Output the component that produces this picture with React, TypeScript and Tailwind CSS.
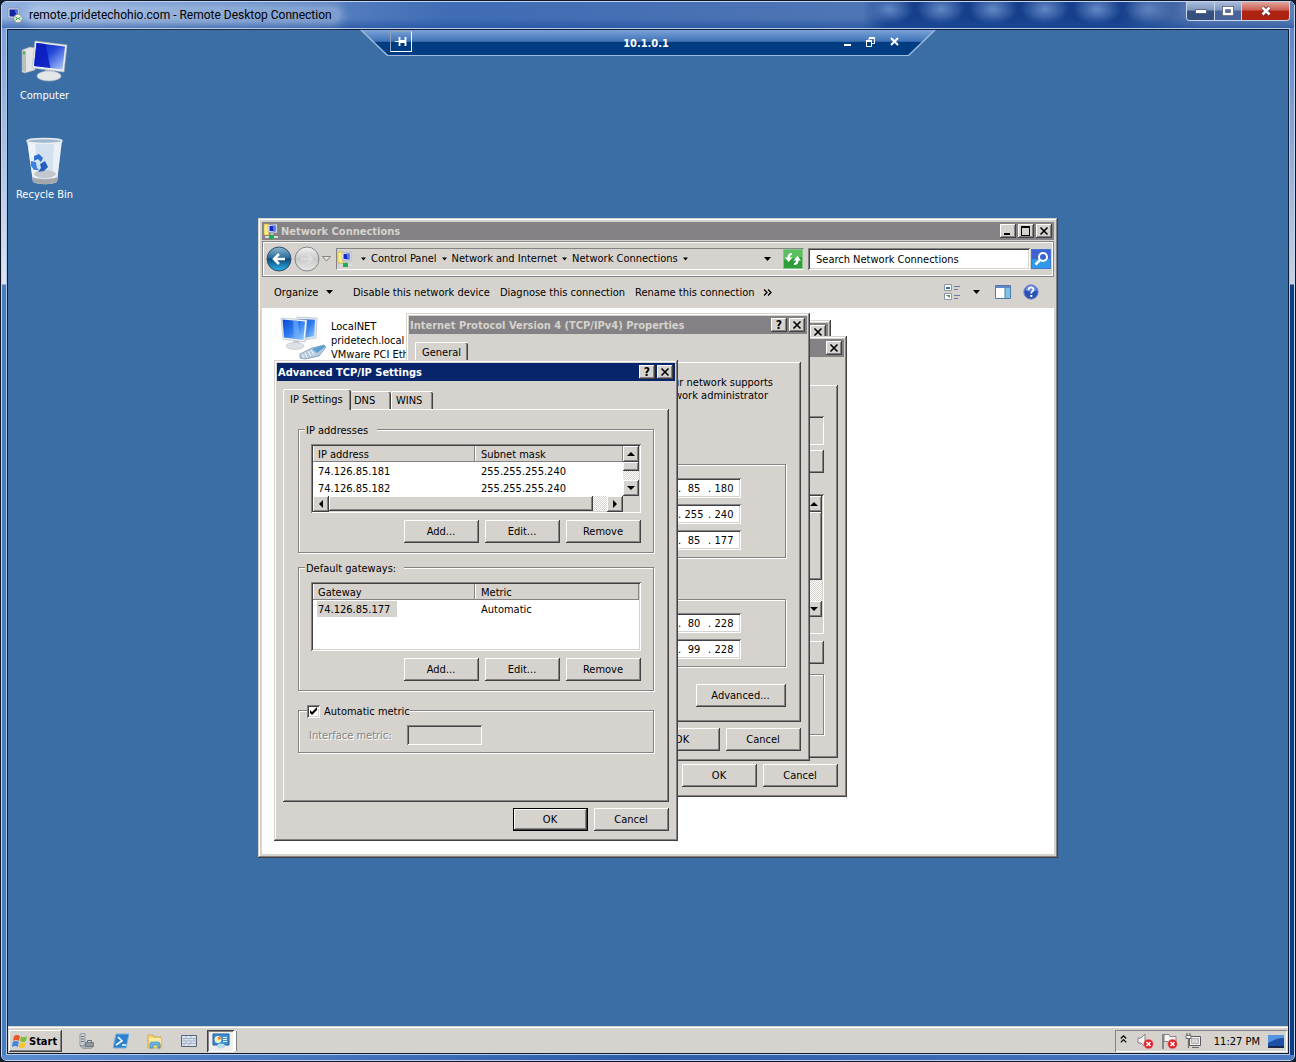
import type { ReactNode } from 'react';
import { clsx } from 'clsx';

// Classic 3D edges
const RAISED = 'bg-[#d6d3ce] shadow-[inset_-1px_-1px_#424142,inset_1px_1px_#ffffff,inset_-2px_-2px_#848284]';
const SUNKEN = 'shadow-[inset_1px_1px_#848284,inset_-1px_-1px_#ffffff,inset_2px_2px_#424142,inset_-2px_-2px_#d6d3ce]';
const WINDOW_EDGE =
  'bg-[#d6d3ce] shadow-[inset_-1px_-1px_#424142,inset_1px_1px_#d6d3ce,inset_-2px_-2px_#848284,inset_2px_2px_#ffffff]';
const DITHER = 'bg-[repeating-conic-gradient(#ffffff_0_25%,#d6d3ce_0_50%)] bg-[length:2px_2px]';

interface ChildrenProps {
  children?: ReactNode;
  className?: string;
}

type CaptionName = 'min' | 'max' | 'close' | 'help';

function Glyph({ name }: { name: CaptionName }) {
  return (
    <svg width="12" height="10" viewBox="0 0 12 10" shapeRendering="crispEdges" fill="none" stroke="#000">
      {name === 'min' && <path d="M2 8h6" strokeWidth="2" />}
      {name === 'max' && <path d="M1.5 1v8.500h8V1" strokeWidth="1" />}
      {name === 'max' && <path d="M1 1h9" strokeWidth="2" />}
      {name === 'close' && <path d="M2.500 1.500l7 7M9.500 1.500l-7 7" strokeWidth="1.600" shapeRendering="auto" />}
    </svg>
  );
}

function CaptionButton({ name }: { name: CaptionName }) {
  return (
    <button
      aria-label={name}
      className={clsx('flex h-[14px] w-4 items-center justify-center text-[12px] leading-[14px] text-black', RAISED)}
    >
      {name === 'help' ? '?' : <Glyph name={name} />}
    </button>
  );
}

interface TitleBarProps {
  title?: string;
  active?: boolean;
  icon?: ReactNode;
  children?: ReactNode;
}

function TitleBar({ title, active, icon, children }: TitleBarProps) {
  return (
    <header
      className={clsx(
        'flex h-[18px] shrink-0 items-center pr-0.5 pl-px font-bold whitespace-nowrap',
        active ? 'bg-[#08246b] text-white' : 'bg-[#848284] text-[#d6d3ce]',
      )}
    >
      {icon}
      <h2 className="flex-1">{title}</h2>
      <div className="flex gap-0.5">{children}</div>
    </header>
  );
}

function Dialog({ children, className }: ChildrenProps) {
  return <section className={clsx('absolute flex flex-col p-[3px]', WINDOW_EDGE, className)}>{children}</section>;
}

function PushButton({ children, isDefault, className = 'w-[75px]' }: ChildrenProps & { isDefault?: boolean }) {
  return (
    <button
      className={clsx('h-[23px] shrink-0 pr-px pb-px text-center', RAISED, isDefault && 'border border-black', className)}
    >
      {children}
    </button>
  );
}

function Group({ legend, children, className }: ChildrenProps & { legend?: ReactNode }) {
  return (
    <fieldset
      className={clsx(
        'min-w-0 border border-[#848284] px-3 shadow-[1px_1px_#ffffff,inset_1px_1px_#ffffff]',
        className,
      )}
    >
      {legend}
      {children}
    </fieldset>
  );
}

function Arrow({ dir }: { dir: 'up' | 'down' | 'left' | 'right' }) {
  const paths = {
    up: 'M0 6h8L4 2z',
    down: 'M0 2h8L4 6z',
    left: 'M6 0v8L2 4z',
    right: 'M2 0v8l4-4z',
  };
  return (
    <svg width="8" height="8" viewBox="0 0 8 8">
      <path d={paths[dir]} />
    </svg>
  );
}

function ScrollButton({ dir }: { dir: 'up' | 'down' | 'left' | 'right' }) {
  return (
    <button aria-label={`Scroll ${dir}`} className={clsx('flex size-4 shrink-0 items-center justify-center', RAISED)}>
      <Arrow dir={dir} />
    </button>
  );
}

interface ListProps {
  columns: string[];
  rows: string[][];
  selected?: number;
}

function DataTable({ columns, rows, selected }: ListProps) {
  return (
    <table className="w-full table-fixed border-collapse text-left">
      <thead>
        <tr className="bg-[#d6d3ce]">
          {columns.map((column, index) => (
            <th
              key={column}
              className={clsx(
                'h-4 p-0 pt-0.5 font-normal leading-[14px] shadow-[inset_-1px_-1px_#848284,inset_1px_0_#ffffff]',
                index === 0 ? 'w-[162px] pl-[5px]' : 'pl-1.5',
              )}
            >
              {column}
            </th>
          ))}
        </tr>
      </thead>
      <tbody>
        {rows.map((row, index) => (
          <tr key={row[0]}>
            {row.map((cell, cellIndex) => (
              <td key={cellIndex} className={clsx('h-[17px] p-0 align-bottom', cellIndex === 0 ? 'pl-1' : 'pl-[5px]')}>
                <span
                  className={clsx(
                    'block h-4 px-px pt-0.5 leading-[14px]',
                    index === selected && cellIndex === 0 && 'w-20 bg-[#d6d3ce]',
                  )}
                >
                  {cell}
                </span>
              </td>
            ))}
          </tr>
        ))}
      </tbody>
    </table>
  );
}

function ListButtons() {
  return (
    <div className="mt-[7px] flex justify-end gap-1.5 pb-[9px]">
      <PushButton>Add...</PushButton>
      <PushButton>Edit...</PushButton>
      <PushButton>Remove</PushButton>
    </div>
  );
}

function Tab({ children, active, className }: ChildrenProps & { active?: boolean }) {
  return (
    <button
      role="tab"
      aria-selected={!!active}
      className={clsx(
        'rounded-t-[2px] border-t border-white bg-[#d6d3ce] text-left shadow-[inset_-1px_0_#424142,inset_-2px_0_#848284]',
        active ? 'relative -mb-px h-[21px] border-l pb-0.5 pl-1.5' : 'h-[18px]',
        className,
      )}
    >
      {children}
    </button>
  );
}

function TabPanel({ children, className }: ChildrenProps) {
  return (
    <div
      role="tabpanel"
      className={clsx(
        'flex flex-1 flex-col shadow-[inset_-1px_-1px_#424142,inset_1px_1px_#ffffff,inset_-2px_-2px_#848284]',
        className,
      )}
    >
      {children}
    </div>
  );
}

function AdvancedDialog() {
  return (
    <Dialog className="top-[330px] left-[266px] h-[481px] w-[404px]">
      <TitleBar title="Advanced TCP/IP Settings" active>
        <CaptionButton name="help" />
        <CaptionButton name="close" />
      </TitleBar>
      <div className="flex flex-1 flex-col px-1.5 pt-2 pb-[7px]">
        <div role="tablist" className="flex items-end">
          <Tab active className="w-[68px]">IP Settings</Tab>
          <Tab className="w-10 pl-[3px]">DNS</Tab>
          <Tab className="w-[42px] border-l pl-1">WINS</Tab>
        </div>
        <TabPanel className="px-[15px] pt-[13px]">
          <Group
            className="pt-2"
            legend={<legend className="-ml-1.5 h-3.5 w-[72px] bg-[#d6d3ce] px-px pt-0.5">IP addresses</legend>}
          >
            <div className={clsx('h-[69px] bg-white p-0.5', SUNKEN)}>
              <div className="flex h-[50px]">
                <div className="min-w-0 flex-1 overflow-hidden">
                  <DataTable
                    columns={['IP address', 'Subnet mask']}
                    rows={[
                      ['74.126.85.181', '255.255.255.240'],
                      ['74.126.85.182', '255.255.255.240'],
                    ]}
                  />
                </div>
                <div className={clsx('flex w-4 flex-col', DITHER)}>
                  <ScrollButton dir="up" />
                  <div className={clsx('mb-auto h-[9px]', RAISED)} />
                  <ScrollButton dir="down" />
                </div>
              </div>
              <div className="flex h-[15px] bg-[#d6d3ce] pr-4">
                <div className={clsx('flex flex-1', DITHER)}>
                  <ScrollButton dir="left" />
                  <div className={clsx('mr-3.5 flex-1', RAISED)} />
                  <ScrollButton dir="right" />
                </div>
              </div>
            </div>
            <ListButtons />
          </Group>
          <Group
            className="mt-[7px] pt-2"
            legend={<legend className="-ml-1.5 h-3.5 w-[99px] bg-[#d6d3ce] px-px pt-0.5">Default gateways:</legend>}
          >
            <div className={clsx('h-[69px] bg-white p-0.5', SUNKEN)}>
              <DataTable columns={['Gateway', 'Metric']} rows={[['74.126.85.177', 'Automatic']]} selected={0} />
            </div>
            <ListButtons />
          </Group>
          <Group
            className="mt-3 pt-2 pb-[7px]"
            legend={
              <legend className="-ml-1 h-3.5 bg-[#d6d3ce] pt-0.5">
                <label className="flex items-center gap-1">
                  <span className="relative flex size-[13px]">
                    <input
                      type="checkbox"
                      defaultChecked
                      className={clsx('peer size-[13px] appearance-none bg-white', SUNKEN)}
                    />
                    <svg
                      className="pointer-events-none absolute inset-0 hidden peer-checked:block"
                      width="13"
                      height="13"
                      viewBox="0 0 13 13"
                    >
                      <path d="M3 5v3l2 2 5-5V2L5 7z" />
                    </svg>
                  </span>
                  Automatic metric
                </label>
              </legend>
            }
          >
            <div className="flex items-center text-[#848284] [text-shadow:1px_1px_#ffffff]">
              <label htmlFor="metric" className="-ml-0.5 w-[98px]">Interface metric:</label>
              <input id="metric" disabled className={clsx('h-5 w-[75px]', SUNKEN)} />
            </div>
          </Group>
        </TabPanel>
        <div className="mt-1.5 flex justify-end gap-1.5">
          <PushButton isDefault>OK</PushButton>
          <PushButton>Cancel</PushButton>
        </div>
      </div>
    </Dialog>
  );
}

function IpField({ label, parts }: { label: string; parts: string[] }) {
  return (
    <div
      role="group"
      aria-label={label}
      className={clsx('ml-auto flex h-5 w-[142px] items-center justify-end bg-white pr-[5px]', SUNKEN)}
    >
      {parts.map((part, index) => (
        <span key={index} className="flex items-center">
          {index > 0 && <span className="w-1.5 pl-0.5">.</span>}
          <input
            aria-label={`${label} part ${index + 1}`}
            defaultValue={part}
            className="h-4 w-6 text-center outline-none"
          />
        </span>
      ))}
    </div>
  );
}

function Ipv4Dialog() {
  return (
    <Dialog className="top-[283px] left-[398px] h-[448px] w-[404px]">
      <TitleBar title="Internet Protocol Version 4 (TCP/IPv4) Properties">
        <CaptionButton name="help" />
        <CaptionButton name="close" />
      </TitleBar>
      <div className="flex flex-1 flex-col px-1.5 pt-2 pb-[7px]">
        <div role="tablist" className="flex items-end">
          <Tab active className="w-[53px]">General</Tab>
        </div>
        <TabPanel className="px-[15px] pt-[14px]">
          <div className="flex h-[88px] flex-col text-right">
            <p className="pr-[13px]">your network supports</p>
            <p className="pr-[18px]">network administrator</p>
          </div>
          <Group className="h-[94px] space-y-1.5 !pr-11 pt-[13px]">
            <IpField label="IP address" parts={['74', '126', '85', '180']} />
            <IpField label="Subnet mask" parts={['255', '255', '255', '240']} />
            <IpField label="Default gateway" parts={['74', '126', '85', '177']} />
          </Group>
          <Group className="mt-[41px] h-[68px] space-y-1.5 !pr-11 pt-[13px]">
            <IpField label="Preferred DNS server" parts={['66', '119', '80', '228']} />
            <IpField label="Alternate DNS server" parts={['66', '119', '99', '228']} />
          </Group>
          <div className="mt-[17px] flex justify-end">
            <PushButton className="w-[90px]">Advanced...</PushButton>
          </div>
        </TabPanel>
        <div className="mt-1.5 flex justify-end gap-1.5">
          <PushButton>OK</PushButton>
          <PushButton>Cancel</PushButton>
        </div>
      </div>
    </Dialog>
  );
}

function LocalNetDialog() {
  return (
    <Dialog className="top-[306px] left-[476px] h-[461px] w-[363px]">
      <TitleBar>
        <CaptionButton name="close" />
      </TitleBar>
      <div className="flex flex-1 flex-col px-1.5 pt-7 pb-[7px]">
        <TabPanel className="px-[14px] pt-[31px]">
          <div className={clsx('h-[29px]', SUNKEN)} />
          <div className="mt-[5px] flex justify-end">
            <PushButton />
          </div>
          <div className={clsx('mt-[21px] h-[140px] p-0.5', SUNKEN)}>
            <div className={clsx('ml-auto flex h-[121px] w-4 flex-col', DITHER)}>
              <ScrollButton dir="up" />
              <div className={clsx('mb-auto h-[68px]', RAISED)} />
              <ScrollButton dir="down" />
            </div>
          </div>
          <div className="mt-[7px] flex justify-end">
            <PushButton />
          </div>
          <Group className="mt-2.5 h-[61px]" />
        </TabPanel>
        <div className="mt-1.5 flex justify-end gap-1.5">
          <PushButton>OK</PushButton>
          <PushButton>Cancel</PushButton>
        </div>
      </div>
    </Dialog>
  );
}

function NetworkIcon({ size = 16 }: { size?: number }) {
  return (
    <svg width={size} height={size} viewBox="0 0 16 16" className="shrink-0">
      <path d="M1 1h5v11H1z" fill="#ffef84" stroke="#c6a23a" strokeWidth=".6" />
      <path d="M5 2l9-1v9l-9-1z" fill="#eceef5" stroke="#8b93ac" strokeWidth=".5" />
      <path d="M6.500 3l6-.6v6l-6-.5z" fill="#1527c4" />
      <path d="M9.500 2.700l3-.3v6l-2-.2z" fill="#5a78ee" />
      <path d="M7.500 10h3v2h-3z" fill="#b8bccb" />
      <path d="M2 13h13v2H2z" fill="#d8dbe0" />
      <path d="M6 12h5v4H6z" fill="#18b052" />
    </svg>
  );
}

function LanIcon() {
  return (
    <svg width="48" height="46" viewBox="0 0 48 46" className="shrink-0">
      <defs>
        <linearGradient id="lan" x1="0" y1="0" x2="1" y2="1">
          <stop offset="0" stopColor="#0f46cc" />
          <stop offset=".5" stopColor="#2d7cf0" />
          <stop offset="1" stopColor="#9bd2ff" />
        </linearGradient>
      </defs>
      <path d="M17 1l20 1-1 20-17 3z" fill="#e6e9ee" stroke="#a8b0bc" strokeWidth=".6" />
      <path d="M19 3l16 .7-.8 16.500-14 2.500z" fill="url(#lan)" />
      <path d="M13 25l6-1 1 6h-6z" fill="#cfd3d8" />
      <ellipse cx="15" cy="30" rx="9" ry="3.500" fill="#dde0e4" stroke="#b0b5bd" strokeWidth=".5" />
      <path d="M1 2l26 2-2 22-22-3z" fill="#f2f4f7" stroke="#a8b0bc" strokeWidth=".6" />
      <path d="M2.500 3.500l22.500 2-1.500 18.500-19.500-2.500z" fill="url(#lan)" />
      <path d="M13 4.500l5 .5 2 18.500-6-.7z" fill="#78b2fa" opacity=".6" />
      <path d="M20 38l12-6 12-3 2 2-7 9-14 3-5-1z" fill="#b7cbe0" stroke="#6b8bab" strokeWidth=".7" />
      <path d="M32 33l12-4 1 2-8 6z" fill="#5d9ed2" />
      <path d="M22 38l2 4M25 36.500l2 5M28 35l3 5M31 34l3 5" stroke="#f4f8fc" strokeWidth="1" />
    </svg>
  );
}

function NavArrow({ forward }: { forward?: boolean }) {
  return (
    <svg width="26" height="26" viewBox="0 0 26 26">
      <defs>
        <linearGradient id="back" x1="0" y1="0" x2="0" y2="1">
          <stop offset="0" stopColor="#8fb6cf" />
          <stop offset=".45" stopColor="#2c6f9c" />
          <stop offset=".5" stopColor="#0c4a7c" />
          <stop offset="1" stopColor="#2cb4e8" />
        </linearGradient>
        <linearGradient id="fwd" x1="0" y1="0" x2="0" y2="1">
          <stop offset="0" stopColor="#f1f1f1" />
          <stop offset=".5" stopColor="#c9c9cb" />
          <stop offset="1" stopColor="#e8e8e8" />
        </linearGradient>
      </defs>
      <circle cx="13" cy="13" r="12" fill={forward ? 'url(#fwd)' : 'url(#back)'} stroke={forward ? '#848487' : '#2f4f66'} />
      <path
        d={forward ? 'M7 13h11M13 8l5 5-5 5' : 'M19 13H8M13 8l-5 5 5 5'}
        fill="none"
        stroke={forward ? '#dcdcde' : '#fff'}
        strokeWidth="2.500"
      />
    </svg>
  );
}

const CRUMBS = ['Control Panel', 'Network and Internet', 'Network Connections'];

function SmallArrow({ className }: { className?: string }) {
  return (
    <svg width="7" height="4" viewBox="0 0 7 4" className={clsx('shrink-0', className)}>
      <path d="M0 0h7L3.500 4z" />
    </svg>
  );
}

// Breadcrumb arrows are drawn a little smaller than the menu ones
function CrumbArrow({ className }: { className?: string }) {
  return (
    <svg width="7" height="4" viewBox="0 0 7 4" className={clsx('shrink-0', className)}>
      <path d="M1 .5h5L3.500 3.500z" />
    </svg>
  );
}

function AddressRow() {
  return (
    <div className="mt-px flex h-9 items-center border border-[#848284] pr-0.5 pl-[3px] shadow-[inset_1px_1px_#ffffff,inset_-1px_-1px_#ffffff]">
      <div className="flex items-center gap-0.5">
        <button aria-label="Back"><NavArrow /></button>
        <button aria-label="Forward"><NavArrow forward /></button>
        <svg width="9" height="6" viewBox="0 0 9 6" className="mr-[5px]">
          <path d="M.5.5h8l-4 4.500z" fill="#e4e4e4" stroke="#848284" />
        </svg>
      </div>
      <nav className="flex h-[22px] flex-1 items-center border border-[#848284] border-r-transparent border-b-white pb-px">
        <NetworkIcon />
        <CrumbArrow className="mr-1 ml-[7px]" />
        {CRUMBS.map((crumb) => (
          <span key={crumb} className="flex items-center">
            <a href="#">{crumb}</a>
            <CrumbArrow className="mx-1" />
          </span>
        ))}
        <SmallArrow className="mr-3 ml-auto" />
        <button aria-label="Refresh">
          <svg width="20" height="20" viewBox="0 0 20 20">
            <path d="M0 0h20v20H0z" fill="#7fcb86" />
            <path d="M1 1h18v18H1z" fill="#2f9e3a" />
            <path d="M1 1h18v7L1 11z" fill="#5cbf5f" />
            <path d="M5.500 13L2 8.500h2.500C4.500 5.500 6 4 9 4v2c-1.300 0-2 .7-2 2.500h2.500z" fill="#fff" />
            <path d="M14.500 7l3.500 4.500h-2.500c0 3-1.500 4.500-4.500 4.500v-2c1.300 0 2-.7 2-2.500h-2.500z" fill="#fff" />
          </svg>
        </button>
      </nav>
      <input
        aria-label="Search"
        defaultValue="Search Network Connections"
        className={clsx('ml-1 h-[22px] w-[222px] bg-white pl-2 outline-none', SUNKEN)}
      />
      <button aria-label="Find" className="ml-px">
        <svg width="20" height="20" viewBox="0 0 20 20">
          <path d="M0 0h20v20H0z" fill="#3f78d8" />
          <path d="M1 1h18v9H1z" fill="#3e63cf" />
          <path d="M1 10h18v9H1z" fill="#2f9be8" />
          <circle cx="12" cy="8" r="4" fill="none" stroke="#fff" strokeWidth="2" />
          <path d="M9 11l-4.500 4.500" stroke="#fff" strokeWidth="2.500" />
        </svg>
      </button>
    </div>
  );
}

function CommandRow() {
  return (
    <div className="flex h-[31px] items-center pr-[15px] pb-px pl-3">
      <button className="mr-5 flex w-[59px] items-center justify-between">
        Organize
        <SmallArrow />
      </button>
      <div className="flex gap-2.5">
        <button>Disable this network device</button>
        <button>Diagnose this connection</button>
        <button>Rename this connection</button>
      </div>
      <button aria-label="More" className="ml-2">
        <svg width="9" height="7" viewBox="0 0 9 7" fill="none" stroke="#000" strokeWidth="1.300">
          <path d="M1 .5l3 3-3 3M5 .5l3 3-3 3" />
        </svg>
      </button>
      <div className="ml-auto flex items-center">
        <button aria-label="Change view" className="flex items-center gap-[13px]">
          <svg width="16" height="16" viewBox="0 0 16 16">
            <path d="M.5.5h7v6h-7zM.5 9.500h7v6h-7z" fill="#fff" stroke="#8c94a8" />
            <path d="M2 3h4v2H2z" fill="#2d6ea8" />
            <path d="M2 11l4 3V11z" fill="#4a9a3c" />
            <path d="M10 2.500h6M10 5.500h4M10 11.500h6M10 14.500h4" stroke="#6c7da4" />
          </svg>
          <SmallArrow />
        </button>
        <button aria-label="Preview pane" className="ml-[15px]">
          <svg width="16" height="14" viewBox="0 0 16 14">
            <path d="M.5.5h15v13H.5z" fill="#fff" stroke="#5078ac" />
            <path d="M1 1h14v2H1z" fill="#5b8ac4" />
            <path d="M10 3h5v10h-5z" fill="#7cc4e4" />
            <path d="M10 3v10" stroke="#5078ac" />
          </svg>
        </button>
        <button aria-label="Help" className="ml-3">
          <svg width="16" height="16" viewBox="0 0 16 16">
            <circle cx="8" cy="8" r="7.300" fill="#2a51b8" stroke="#8c9cc8" />
            <path d="M2 6a6.200 6.200 0 0 1 12 0c-3 2-9 2-12 0z" fill="#6a8ade" />
            <path d="M5.500 6c0-3.500 5-3.300 5-.5 0 2-2.300 1.800-2.300 4" fill="none" stroke="#fff" strokeWidth="1.700" />
            <path d="M7.300 11h2v2h-2z" fill="#fff" />
          </svg>
        </button>
      </div>
    </div>
  );
}

function NetworkWindow() {
  return (
    <section className={clsx('absolute top-[188px] left-[250px] flex h-[640px] w-[800px] flex-col p-1', WINDOW_EDGE)}>
      <TitleBar title="Network Connections" icon={<span className="mr-0.5"><NetworkIcon /></span>}>
        <CaptionButton name="min" />
        <CaptionButton name="max" />
        <CaptionButton name="close" />
      </TitleBar>
      <AddressRow />
      <CommandRow />
      <div className="flex-1 bg-white px-[18px] pt-2">
        <div className="flex gap-[3px] whitespace-nowrap">
          <LanIcon />
          <div className="pt-1 leading-[14px]">
            <p>LocalNET</p>
            <p>pridetech.local</p>
            <p>VMware PCI Eth</p>
          </div>
        </div>
      </div>
    </section>
  );
}

function DesktopIcons() {
  return (
    <div className="flex w-[73px] flex-col items-center pt-2 text-white">
      <a href="#" className="flex flex-col items-center">
        <svg width="48" height="48" viewBox="0 0 48 48">
          <defs>
            <linearGradient id="screen" x1="0" y1="0" x2="1" y2="1">
              <stop offset="0" stopColor="#0a1fae" />
              <stop offset=".45" stopColor="#2447d8" />
              <stop offset="1" stopColor="#b4d0ff" />
            </linearGradient>
          </defs>
          <path d="M2 12l8-3 5 1v22L5 35l-3-1z" fill="#e3e5e4" stroke="#a5aaad" strokeWidth=".5" />
          <path d="M2 12l4 1v21l-4-1z" fill="#b9bfbd" />
          <circle cx="4" cy="15" r="1.200" fill="#2fb53c" />
          <path d="M15 3l32 4-3 27-32-4z" fill="#eceef0" stroke="#b0b6bc" strokeWidth=".6" />
          <path d="M16.500 5l28.500 3.500-2.500 23L14 28z" fill="url(#screen)" />
          <path d="M16.500 5l9 1 5 24-16.500-2z" fill="#0b1cc0" opacity=".85" />
          <path d="M25 32l9 1v5h-9z" fill="#c6cacd" />
          <ellipse cx="29" cy="38" rx="12" ry="5" fill="#e4e7e8" stroke="#b3b9bd" strokeWidth=".6" />
        </svg>
        <span className="mt-[3px]">Computer</span>
      </a>
      <a href="#" className="mt-[35px] flex flex-col items-center">
        <svg width="48" height="48" viewBox="0 0 48 48">
          <path d="M7 3l35 0-5 42c-6 3-18 3-24 0z" fill="#dfe9f3" opacity=".93" />
          <path d="M7 3h8l3 43-5-1z" fill="#fff" opacity=".6" />
          <path d="M34 3h8l-5 42-5 1z" fill="#fff" opacity=".5" />
          <path d="M12.500 40c6 3 18 3 25 0l-.5 5c-6 3-18 3-24 0z" fill="#a4a8ac" />
          <ellipse cx="25" cy="37" rx="11" ry="4" fill="#c4c8cc" />
          <ellipse cx="24.500" cy="4" rx="17.500" ry="2.500" fill="#9fb8ce" stroke="#e8ecef" strokeWidth="1.500" />
          <path d="M14 19l5-2 4 4-2 4-3-3-4 2z" fill="#2d6fd0" />
          <path d="M11 24l5 1 1 6 2 2-5 0-3-4z" fill="#3c82e0" />
          <path d="M20 27l5-3 3 6-4 4-6 1 3-4z" fill="#245fc0" />
        </svg>
        <span className="mt-[3px]">Recycle Bin</span>
      </a>
    </div>
  );
}

function ConnectionBar() {
  return (
    <div className="absolute top-0 left-1/2 h-[26px] w-[576px] -translate-x-1/2 bg-[#9fbbdd] pb-px [clip-path:polygon(0_0,100%_0,calc(100%-27px)_100%,27px_100%)]">
      <div className="flex h-[25px] items-center bg-linear-to-b from-[#7ba2d8] from-0% via-[#3f74b8] via-45% to-[#003c82] to-50% pr-[37px] pl-[30px] text-white [clip-path:polygon(2px_0,calc(100%-2px)_0,calc(100%-28px)_100%,28px_100%)]">
        <button
          aria-label="Pin"
          className="mb-0.5 flex h-[21px] w-[22px] items-center justify-center border border-[#8fa0b8] border-r-white border-b-white"
        >
          <svg width="12" height="9" viewBox="0 0 12 9" stroke="#fff" fill="none">
            <path d="M0 4.500h4" strokeWidth="1" />
            <path d="M4.500 0v9M10.500 0v9" strokeWidth="1.800" />
            <path d="M5 4.500h5" strokeWidth="3" />
          </svg>
        </button>
        <span className="flex-1 pt-px pl-9 text-center font-bold">10.1.0.1</span>
        <div className="flex items-center gap-[15px]">
          <button aria-label="Minimize">
            <svg width="7" height="10" viewBox="0 0 7 10"><path d="M0 6h7v2H0z" fill="#fff" /></svg>
          </button>
          <button aria-label="Restore" className="pb-0.5">
            <svg width="9" height="10" viewBox="0 0 9 10" fill="none" stroke="#fff">
              <path d="M.5 4v5.500h5V4M3 3V1M8.500 1v5.500H6" />
              <path d="M0 4h6M3 1h6" strokeWidth="2" />
            </svg>
          </button>
          <button aria-label="Close" className="pb-0.5">
            <svg width="9" height="9" viewBox="0 0 9 9" stroke="#fff" strokeWidth="2">
              <path d="M1 1l7 7M8 1L1 8" />
            </svg>
          </button>
        </div>
      </div>
    </div>
  );
}

function Taskbar() {
  return (
    <footer className="flex h-[27px] items-center border-t border-[#d6d3ce] bg-[#d6d3ce] px-px shadow-[inset_0_1px_#ffffff]">
      <button className={clsx('mt-0.5 flex h-[22px] w-[53px] items-center pl-[3px] font-bold', RAISED)}>
        <svg width="16" height="16" viewBox="0 0 16 16" className="shrink-0">
          <path d="M2 3c2-1.500 4-1.500 6 0L7 8C5 6.800 3 6.800 1 8z" fill="#e8562a" />
          <path d="M9 3.500c2 1 4 1 6-.5l-1 5c-2 1.300-4 1.300-6 .3z" fill="#7dbb3a" />
          <path d="M.8 9c2-1.200 4-1.200 6 0l-1 5c-2-1.200-4-1.200-6 0z" fill="#3d86d8" />
          <path d="M7.700 9.400c2 1 4 1 6-.4l-1 5c-2 1.300-4 1.300-6 .3z" fill="#f7c628" />
        </svg>
        <span className="ml-px">Start</span>
      </button>
      <div className="mt-0.5 ml-[17px] flex items-center gap-[18px]">
        <button aria-label="Server Manager">
          <svg width="16" height="16" viewBox="0 0 16 16">
            <path d="M1 1l5-1v12l-5 1z" fill="#c9ced3" stroke="#7d858c" strokeWidth=".7" />
            <path d="M2 3.500h3M2 6h3M2 8.500h3" stroke="#6e767d" />
            <path d="M1 13l8-1 6 1-3 2.500H4z" fill="#aab1b6" stroke="#7d858c" strokeWidth=".5" />
            <path d="M6.500 9.500h8v4h-8z" fill="#8e979e" stroke="#5e676e" strokeWidth=".7" />
            <path d="M8.500 9V7.500h4V9" fill="none" stroke="#5e676e" />
          </svg>
        </button>
        <button aria-label="PowerShell">
          <svg width="16" height="16" viewBox="0 0 16 16">
            <path d="M3 1h13l-3 14H0z" fill="#2b83cf" stroke="#77b0e0" />
            <path d="M5 4l4 4-6 4M9 12h4" fill="none" stroke="#fff" strokeWidth="1.600" />
          </svg>
        </button>
        <button aria-label="Explorer">
          <svg width="16" height="16" viewBox="0 0 16 16">
            <path d="M1 2h5l1 2h7v11H1z" fill="#f4d66c" stroke="#c49c38" strokeWidth=".7" />
            <path d="M2 5h12v6H2z" fill="#fbeaa0" />
            <path d="M3 15v-4c0-1.500 1-2 2-2h6c1 0 2 .5 2 2v4h-2v-3H6v3z" fill="#6cb4e4" stroke="#3a7cb4" strokeWidth=".6" />
          </svg>
        </button>
        <button aria-label="Firewall">
          <svg width="16" height="12" viewBox="0 0 16 12">
            <path d="M.5.5h15v11H.5z" fill="#dbe4f0" stroke="#54657c" />
            <path
              d="M1 3.500h14M1 6h14M1 8.500h14M5 1v2.500M10 1v2.500M3 3.500V6M8 3.500V6M13 3.500V6M5 6v2.500M10 6v2.500M3 8.500V11M8 8.500V11"
              stroke="#9cabc0"
              strokeWidth=".8"
            />
          </svg>
        </button>
      </div>
      <button
        aria-label="Network Connections"
        className="mt-0.5 ml-2.5 flex h-[22px] w-[27px] items-center justify-center bg-[#efeeec] shadow-[inset_1px_1px_#424142,inset_-1px_-1px_#ffffff,inset_2px_2px_#848284]"
      >
        <svg width="18" height="16" viewBox="0 0 18 16">
          <path d="M1 1h16v11H1z" fill="#3c90d4" stroke="#1c5c9c" />
          <circle cx="6" cy="6.500" r="3" fill="#f8e8a0" stroke="#fff" />
          <path d="M6 6.500V3.500a3 3 0 0 1 3 3z" fill="#e88428" />
          <path d="M11 4.500h4M11 6.500h4M11 8.500h4" stroke="#e8f4ff" />
          <ellipse cx="9" cy="13" rx="4" ry="2.500" fill="#b8dcf0" />
        </svg>
      </button>
      <span className="mt-0.5 h-5 w-[3px] border-r border-[#848284] bg-white" />
      <div className="mt-0.5 ml-auto flex h-[22px] w-[172px] items-center pr-[3px] pl-[5px] shadow-[inset_1px_1px_#848284,inset_-1px_-1px_#ffffff]">
        <button aria-label="Show hidden icons" className="mr-2.5 pb-1">
          <svg width="7" height="8" viewBox="0 0 7 8" fill="none" stroke="#000" strokeWidth="1.200">
            <path d="M.8 3.500l2.700-2.700 2.700 2.700M.8 7.300l2.700-2.700 2.700 2.700" />
          </svg>
        </button>
        <div className="flex gap-[7px]">
          <svg width="17" height="16" viewBox="0 0 17 16">
            <path d="M1 5h3l4-4v13l-4-4H1z" fill="#f4f4f4" stroke="#848284" />
            <circle cx="11.500" cy="11" r="4.800" fill="#d8262c" stroke="#f0a0a0" strokeWidth=".6" />
            <path d="M9.500 9l4 4M13.500 9l-4 4" stroke="#fff" strokeWidth="1.500" />
          </svg>
          <svg width="17" height="16" viewBox="0 0 17 16">
            <path d="M2 1v15" stroke="#6c6c6c" strokeWidth="1.500" />
            <path d="M3 1.500h5l1 2h6v7H8l-1-2H3z" fill="#f8f8f8" stroke="#848284" />
            <circle cx="11.500" cy="11" r="4.800" fill="#d8262c" stroke="#f0a0a0" strokeWidth=".6" />
            <path d="M9.500 9l4 4M13.500 9l-4 4" stroke="#fff" strokeWidth="1.500" />
          </svg>
          <svg width="17" height="16" viewBox="0 0 17 16" fill="none" stroke="#6c6c6c">
            <path d="M4.500 3.500h11v9h-11z" fill="#f4f4f4" stroke="#5c5c5c" />
            <path d="M6.500 5.500h7v5h-7z" fill="#d4d4d4" stroke="#b0b0b0" />
            <path d="M7 14.500h7" />
            <path d="M1 2.500h5v3H1z" fill="#f8f8f8" />
            <path d="M2 0v2M5 0v2M3.500 6v9" strokeWidth="1.200" />
          </svg>
        </div>
        <time className="ml-auto whitespace-nowrap">11:27 PM</time>
        <svg width="16" height="13" viewBox="0 0 16 13" className="ml-2">
          <path d="M0 0h16v11H0z" fill="#1e50a8" />
          <path d="M0 0h16v3c-6 0-10 2-16 5z" fill="#5494e0" />
          <path d="M0 11h16v2H0z" fill="#18284c" />
        </svg>
      </div>
    </footer>
  );
}

const AERO_BUTTON = 'flex items-center justify-center border-r border-[#c9d6ea]';

function AeroHeader() {
  return (
    <header className="relative flex h-[26px] shrink-0 items-start bg-linear-to-r from-[#8fb0de] from-0% via-[#3f6cb4] via-35% to-[#5f7fb4] to-100%">
      {/* Blurred wallpaper behind the glass */}
      <div className="absolute inset-y-0 right-[90px] left-2/3 bg-[radial-gradient(ellipse_24px_16px_at_26px_7px,#6488c6,transparent),linear-gradient(#16408c,#16408c)] bg-[length:52px_26px,auto] [mask-image:linear-gradient(to_right,transparent,black_24px,black_75%,transparent)]" />
      <div className="absolute inset-x-0 bottom-0 h-2.5 bg-linear-to-b from-transparent to-[#1c4c9c]/60" />
      <div className="relative flex h-full items-center gap-1.5 pl-[5px]">
        <svg width="16" height="16" viewBox="0 0 16 16">
          <path d="M1 1h11v10H1z" fill="#dfe6f0" stroke="#8898b8" />
          <path d="M2.500 2.500h8v7h-8z" fill="#1224a0" />
          <path d="M7 2.500h3.500v7z" fill="#4c70dc" />
          <circle cx="11" cy="11.500" r="4.300" fill="#e4efe0" stroke="#7c8c80" strokeWidth=".8" />
          <path d="M8.500 10l2 1.500-2 1.500M13.500 10l-2 1.500 2 1.500" stroke="#2c9434" fill="none" />
        </svg>
        <h1 className="rounded-full bg-white/25 pr-2 font-[Roboto,sans-serif] text-[12px] leading-4 whitespace-nowrap text-black shadow-[0_0_8px_4px_rgba(255,255,255,0.25)]">
          remote.pridetechohio.com - Remote Desktop Connection
        </h1>
      </div>
      <div className="relative mr-1 ml-auto flex h-[19px] overflow-hidden rounded-b-[4px] border border-t-0 border-[#c9d6ea]">
        <button
          aria-label="Minimize"
          className={clsx('w-[28px] bg-linear-to-b from-[#a9bcd8] from-0% via-[#7f97c0] via-45% to-[#35507e] to-50%', AERO_BUTTON)}
        >
          <svg width="12" height="5" viewBox="0 0 12 5">
            <path d="M.5.5h11v4H.5z" fill="#fff" stroke="#44506a" strokeWidth=".8" />
          </svg>
        </button>
        <button
          aria-label="Maximize"
          className={clsx('w-[27px] bg-linear-to-b from-[#a9bcd8] from-0% via-[#7f97c0] via-45% to-[#46649a] to-50%', AERO_BUTTON)}
        >
          <svg width="12" height="10" viewBox="0 0 12 10" fill="none">
            <path d="M2 2h8v6H2z" stroke="#44506a" strokeWidth="4" />
            <path d="M2 2h8v6H2z" stroke="#fff" strokeWidth="2.500" />
          </svg>
        </button>
        <button
          aria-label="Close"
          className="flex w-[47px] items-center justify-center bg-linear-to-b from-[#e0a49c] from-0% via-[#cc5c50] via-45% to-[#ad2312] to-50%"
        >
          <svg width="12" height="10" viewBox="0 0 12 10" fill="none">
            <path d="M2.500 1.500l7 7M9.500 1.500l-7 7" stroke="#5c3038" strokeWidth="4" />
            <path d="M2.500 1.500l7 7M9.500 1.500l-7 7" stroke="#fff" strokeWidth="2.500" />
          </svg>
        </button>
      </div>
    </header>
  );
}

export default function App() {
  return (
    <div className="flex h-screen min-h-[900px] flex-col bg-[#101c30] font-['DejaVu_Sans_Condensed','Noto_Sans',sans-serif] text-[11px] leading-[13px] text-black">
      <div className="flex flex-1 flex-col overflow-hidden rounded-[6px] border border-[#101828]">
        <div className="flex flex-1 flex-col overflow-hidden rounded-[5px] border border-[#c4d4ee] bg-[#4c80c8]">
          <AeroHeader />
          <div className="flex min-h-0 flex-1">
            <div className="w-1 bg-linear-to-b from-[#7ba0d8] from-0% via-[#dfe5f5] via-[256px] to-[#4a7cc0] to-[257px]" />
            <main className="flex min-w-0 flex-1 flex-col border border-[#b5cbe8]">
              <div className="flex flex-1 flex-col border border-[#0c1c34]">
                <div className="relative flex-1 overflow-hidden bg-[#3a6ea5]">
                  <DesktopIcons />
                  <ConnectionBar />
                  <NetworkWindow />
                  <Dialog className="top-[290px] left-[460px] h-[400px] w-[363px]">
                    <TitleBar>
                      <CaptionButton name="close" />
                    </TitleBar>
                  </Dialog>
                  <LocalNetDialog />
                  <Ipv4Dialog />
                  <AdvancedDialog />
                </div>
                <Taskbar />
              </div>
            </main>
            <div className="w-1 bg-linear-to-b from-[#5f86c4] from-0% via-[#c9d2e4] via-[256px] to-[#103c80] to-[257px]" />
          </div>
          <div className="h-[5px] bg-linear-to-r from-[#5a8cd0] via-[#2c5ca8] to-[#4c7cc4]" />
        </div>
      </div>
    </div>
  );
}
